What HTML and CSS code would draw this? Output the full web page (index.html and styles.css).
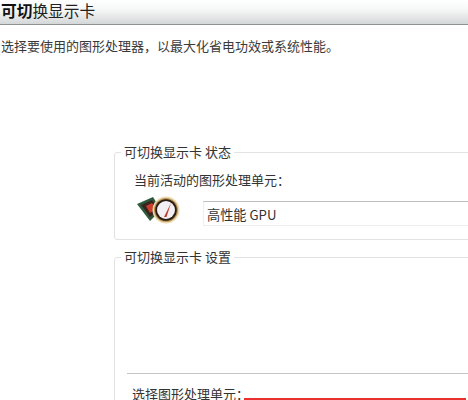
FILE: index.html
```html
<!DOCTYPE html>
<html lang="zh-CN">
<head>
    <meta charset="UTF-8">
    <title>可切换显示卡</title>
    <link rel="stylesheet" href="styles.css">
</head>
<body>

<div class="title-bar"><b>可切</b>换显示卡</div>
<p class="intro">选择要使用的图形处理器，以最大化省电功效或系统性能。</p>

<div class="panels">
    <!-- status -->
    <fieldset class="group group-status">
        <legend>可切换显示卡 状态</legend>
        <div class="row-label">当前活动的图形处理单元：</div>
        <div class="gpu-row">
            <svg class="gpu-icon" width="44" height="36" viewBox="0 0 44 36">
                <path d="M0 14 L16 7 L24 20 L13 31 Z" fill="#2f5a3c"/>
                <path d="M4 15 L15 10 L22 20 L13 27 Z" fill="#3a2420"/>
                <path d="M9 16 L15 13 L19 19 L13 23 Z" fill="#c8402c"/>
                <circle cx="29" cy="20" r="13.5" fill="#eadbb4"/>
                <circle cx="29" cy="20" r="12" fill="#b8924e"/>
                <circle cx="29" cy="20" r="10.8" fill="#2a1c14"/>
                <circle cx="29" cy="20" r="9" fill="#f2f0f2"/>
                <path d="M27 27 L34 13 L29.5 27 Z" fill="#c23a32"/>
            </svg>
            <div class="gpu-field">高性能 GPU</div>
        </div>
    </fieldset>

    <!-- settings -->
    <fieldset class="group group-settings">
        <legend>可切换显示卡 设置</legend>
        <div class="divider"></div>
        <div class="select-row">
            <span>选择图形处理单元：</span>
            <div class="red-line"></div>
        </div>
    </fieldset>
</div>

</body>
</html>
```

FILE: styles.css
```css
html, body {
    height: 400px;
    overflow: hidden;
}
body {
    margin: 0;
    background-color: #fff;
    color: #333;
    font-family: "Noto Sans CJK SC", "Liberation Sans", sans-serif;
    font-size: 13px;
}
.title-bar {
    height: 24px;
    line-height: 21px;
    padding-left: 1px;
    font-size: 15.7px;
    color: #222;
    background: linear-gradient(#fff 0%, #f6f7f7 40%, #d4d7d8 100%);
    border-bottom: 1px solid #8e9191;
}
.title-bar b {
    color: #111;
}
.intro {
    margin: 13px 0 0 1px;
    line-height: 16px;
    color: #3a3a3a;
}
.panels {
    margin: 90px 0 0 114px;
    width: 420px;
}
.group {
    margin: 0;
    padding: 0;
    border: 1px solid #e2e2e2;
    border-radius: 3px;
    min-width: 0;
}
.group legend {
    margin-left: 6px;
    padding: 0 3px 0 3px;
    line-height: 16px;
    color: #333;
}
.group-status {
    height: 94px;
}
.group-settings {
    margin-top: 9px;
    height: 200px;
}
.row-label {
    margin: 12px 0 0 19px;
    line-height: 16px;
}
.gpu-row {
    display: flex;
    align-items: flex-start;
    margin: 2px 0 0 22px;
}
.gpu-icon {
    flex: none;
}
.gpu-field {
    flex: 1;
    height: 23px;
    line-height: 25px;
    margin: 11px 0 0 22px;
    padding-left: 3px;
    font-size: 13.2px;
    color: #333;
    border-top: 1px solid #bdbdbd;
    border-left: 1px solid #eee;
    border-bottom: 1px solid #eee;
}
.divider {
    margin: 108px 0 0 12px;
    border-top: 1px solid #c4c4c4;
}
.select-row {
    position: relative;
    margin: 12px 0 0 17px;
    line-height: 16px;
}
.red-line {
    position: absolute;
    left: 112px;
    top: 12px;
    width: 222px;
    height: 2px;
    background-color: #e8302c;
}
```
